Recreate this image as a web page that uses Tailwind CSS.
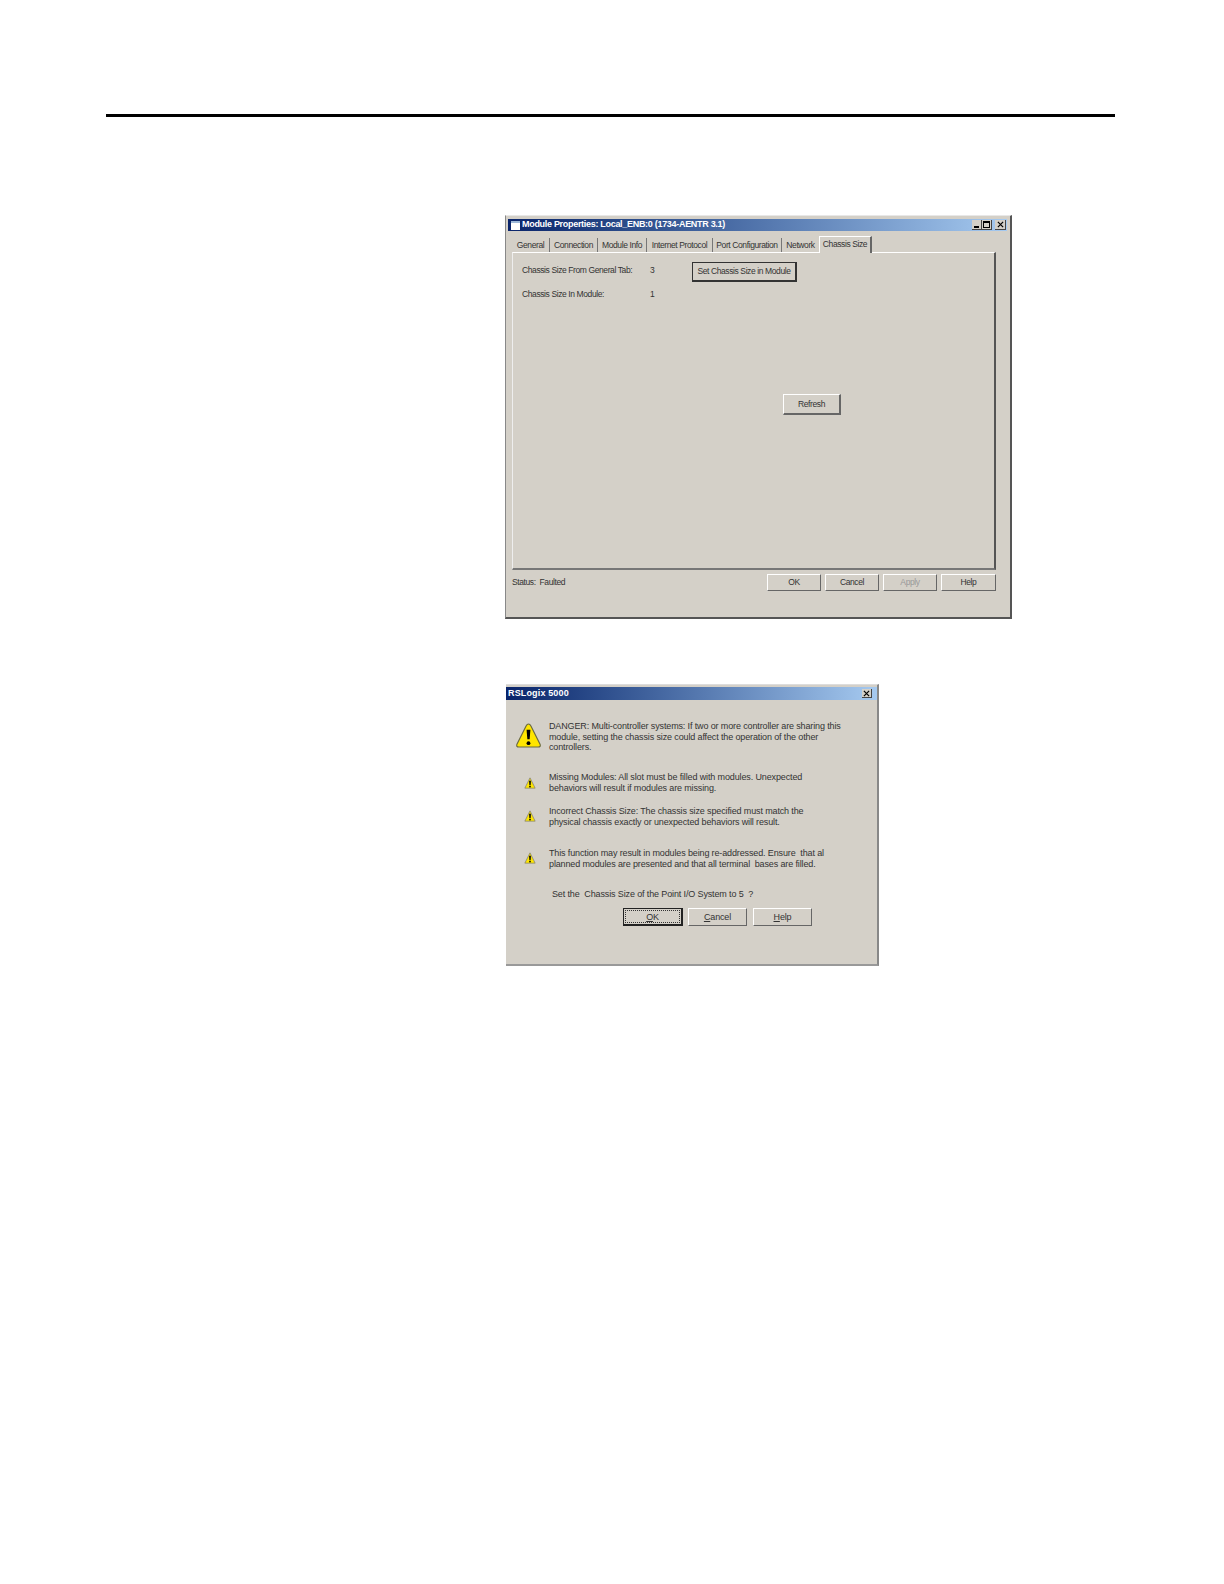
<!DOCTYPE html>
<html lang="en">
<head>
    <meta charset="UTF-8">
    <title>Module Properties</title>
    <script src="https://cdn.jsdelivr.net/npm/@tailwindcss/browser@4"></script>
</head>
<body class="bg-white min-h-screen font-['Liberation_Sans',sans-serif] text-[#222]">

<div class="h-[1584px] pt-[114px] pl-[106px] w-[1224px]">
    <div class="w-[1009px] h-[3px] bg-black"></div>

    <!-- Module Properties dialog -->
    <div class="mt-[98px] ml-[399px] w-[507px] h-[404px] bg-[#d4d0c8] border border-t-[#e8e8e8] border-l-[#888] border-r-2 border-b-2 border-r-[#555] border-b-[#555] pt-[3px] pl-[2px] pr-[3px]">
        <div class="h-[12px] flex items-center justify-between pl-[3px] pr-[1px] bg-gradient-to-r from-[#0a246a] to-[#a6caf0]">
            <div class="flex items-center gap-[2px]">
                <div class="w-[9px] h-[9px] bg-white border-t-2 border-[#9db8d8]"></div>
                <span class="text-[9px] font-bold text-white tracking-[-0.3px] whitespace-nowrap">Module Properties: Local_ENB:0 (1734-AENTR 3.1)</span>
            </div>
            <div class="flex">
                <div class="w-[10px] h-[10px] bg-[#d4d0c8] border-r border-b border-[#444] flex items-end justify-center pb-[1px]"><div class="w-[5px] h-[2px] bg-black"></div></div>
                <div class="w-[10px] h-[10px] bg-[#d4d0c8] border-r border-b border-[#444] flex items-center justify-center mr-[3px]"><div class="w-[7px] h-[7px] border border-t-2 border-black"></div></div>
                <div class="w-[11px] h-[10px] bg-[#d4d0c8] border-r border-b border-[#444] flex items-center justify-center">
                    <svg viewBox="0 0 8 8" class="w-[7px] h-[7px]"><path d="M1 1l6 6M7 1l-6 6" stroke="#000" stroke-width="1.4"/></svg>
                </div>
            </div>
        </div>

        <div class="ml-[4px] mr-[11px] text-[8.5px] tracking-[-0.4px] text-[#333] whitespace-nowrap">
            <div class="flex items-end h-[21px]">
                <div class="w-[38px] h-[14px] text-center leading-[14px] border-r border-[#777]">General</div>
                <div class="w-[48px] h-[14px] text-center leading-[14px] border-r border-[#777]">Connection</div>
                <div class="w-[49px] h-[14px] text-center leading-[14px] border-r border-[#777]">Module Info</div>
                <div class="w-[66px] h-[14px] text-center leading-[14px] border-r border-[#777]">Internet Protocol</div>
                <div class="w-[69px] h-[14px] text-center leading-[14px] border-r border-[#777]">Port Configuration</div>
                <div class="w-[37px] h-[14px] text-center leading-[14px]">Network</div>
                <div class="relative -mb-px w-[53px] h-[17px] bg-[#d4d0c8] text-center leading-[15px] border-t border-l border-white border-r-2 border-r-[#666]">Chassis Size</div>
            </div>

            <div class="h-[318px] border border-t-white border-l-[#eee] border-r-2 border-b-2 border-r-[#555] border-b-[#777] pt-[11px] pl-[9px]">
                <div class="flex items-start h-[24px]">
                    <span class="w-[128px] leading-[12px]">Chassis Size From General Tab:</span>
                    <span class="w-[42px] leading-[12px]">3</span>
                    <div class="-mt-[2px] w-[105px] h-[20px] border border-[#333] border-r-2 border-b-2 text-center leading-[17px]">Set Chassis Size in Module</div>
                </div>
                <div class="flex items-start h-[12px]">
                    <span class="w-[128px] leading-[12px]">Chassis Size In Module:</span>
                    <span class="leading-[12px]">1</span>
                </div>
                <div class="mt-[94px] ml-[261px] w-[58px] h-[21px] border border-white border-r-[#666] border-b-[#666] border-r-2 border-b-2 text-center leading-[18px]">Refresh</div>
            </div>

            <div class="flex items-center justify-between h-[17px] mt-[4px]">
                <span>Status:&nbsp; Faulted</span>
                <div class="flex gap-[4px]">
                    <div class="w-[54px] h-[17px] border border-white border-r-[#666] border-b-[#666] text-center leading-[15px]">OK</div>
                    <div class="w-[54px] h-[17px] border border-white border-r-[#666] border-b-[#666] text-center leading-[15px]">Cancel</div>
                    <div class="w-[54px] h-[17px] border border-white border-r-[#666] border-b-[#666] text-center leading-[15px] text-[#999]">Apply</div>
                    <div class="w-[55px] h-[17px] border border-white border-r-[#666] border-b-[#666] text-center leading-[15px]">Help</div>
                </div>
            </div>
        </div>
    </div>

    <!-- RSLogix confirmation -->
    <div class="mt-[65px] ml-[400px] w-[373px] h-[282px] bg-[#d4d0c8] border-t border-[#ddd] border-r-2 border-r-[#888] border-b-2 border-b-[#999] pt-[2px]">
        <div class="h-[13px] flex items-center justify-between pl-[2px] pr-[5px] bg-gradient-to-r from-[#0a246a] to-[#a6caf0]">
            <span class="text-[9px] font-bold text-white tracking-[0.15px]">RSLogix 5000</span>
            <div class="w-[10px] h-[9px] bg-[#d4d0c8] border-r border-b border-[#444] flex items-center justify-center">
                <svg viewBox="0 0 8 8" class="w-[7px] h-[7px]"><path d="M1 1l6 6M7 1l-6 6" stroke="#000" stroke-width="1.4"/></svg>
            </div>
        </div>

        <div class="pt-[21px] text-[9px] tracking-[-0.13px] leading-[10.5px] text-[#333] whitespace-nowrap">
            <div class="flex h-[51px] items-start">
                <svg viewBox="0 0 26 28" class="ml-[10px] mt-[1px] w-[25px] h-[27px]"><path d="M13 2Q14.500 2 15.500 4L25 23Q26 26 23 26H3Q0 26 1 23L10.500 4Q11.500 2 13 2Z" fill="#ffe600" stroke="#6a6a40" stroke-width="1.200"/><path d="M11 8h4l-.8 10h-2.400z" fill="#000"/><circle cx="13" cy="22" r="2" fill="#000"/></svg>
                <p class="ml-[8px]">DANGER: Multi-controller systems: If two or more controller are sharing this<br>module, setting the chassis size could affect the operation of the other<br>controllers.</p>
            </div>
            <div class="flex h-[34px] items-start">
                <svg viewBox="0 0 14 14" class="ml-[18px] mt-[5px] w-[12px] h-[12px]"><path d="M7 1l6 12H1z" fill="#ffe600" stroke="#777" stroke-width=".8"/><path d="M6 4.500h2l-.3 5h-1.400z" fill="#000"/><circle cx="7" cy="11.200" r="1" fill="#000"/></svg>
                <p class="ml-[13px]">Missing Modules: All slot must be filled with modules. Unexpected<br>behaviors will result if modules are missing.</p>
            </div>
            <div class="flex h-[42px] items-start">
                <svg viewBox="0 0 14 14" class="ml-[18px] mt-[4px] w-[12px] h-[12px]"><path d="M7 1l6 12H1z" fill="#ffe600" stroke="#777" stroke-width=".8"/><path d="M6 4.500h2l-.3 5h-1.400z" fill="#000"/><circle cx="7" cy="11.200" r="1" fill="#000"/></svg>
                <p class="ml-[13px]">Incorrect Chassis Size: The chassis size specified must match the<br>physical chassis exactly or unexpected behaviors will result.</p>
            </div>
            <div class="flex h-[41px] items-start">
                <svg viewBox="0 0 14 14" class="ml-[18px] mt-[4px] w-[12px] h-[12px]"><path d="M7 1l6 12H1z" fill="#ffe600" stroke="#777" stroke-width=".8"/><path d="M6 4.500h2l-.3 5h-1.400z" fill="#000"/><circle cx="7" cy="11.200" r="1" fill="#000"/></svg>
                <p class="ml-[13px]">This function may result in modules being re-addressed. Ensure&nbsp; that al<br>planned modules are presented and that all terminal&nbsp; bases are filled.</p>
            </div>
            <p class="ml-[46px]">Set the&nbsp; Chassis Size of the Point I/O System to 5&nbsp; ?</p>
            <div class="flex ml-[117px] mt-[8px]">
                <div class="w-[60px] h-[18px] border border-[#222] border-r-2 border-b-2 p-[1px]"><div class="h-full border border-dotted border-[#333] text-center leading-[12px]"><span class="underline">O</span>K</div></div>
                <div class="ml-[5px] w-[59px] h-[18px] border border-white border-r-[#666] border-b-[#666] text-center leading-[16px]"><span class="underline">C</span>ancel</div>
                <div class="ml-[6px] w-[59px] h-[18px] border border-white border-r-[#666] border-b-[#666] text-center leading-[16px]"><span class="underline">H</span>elp</div>
            </div>
        </div>
    </div>
</div>

</body>
</html>
